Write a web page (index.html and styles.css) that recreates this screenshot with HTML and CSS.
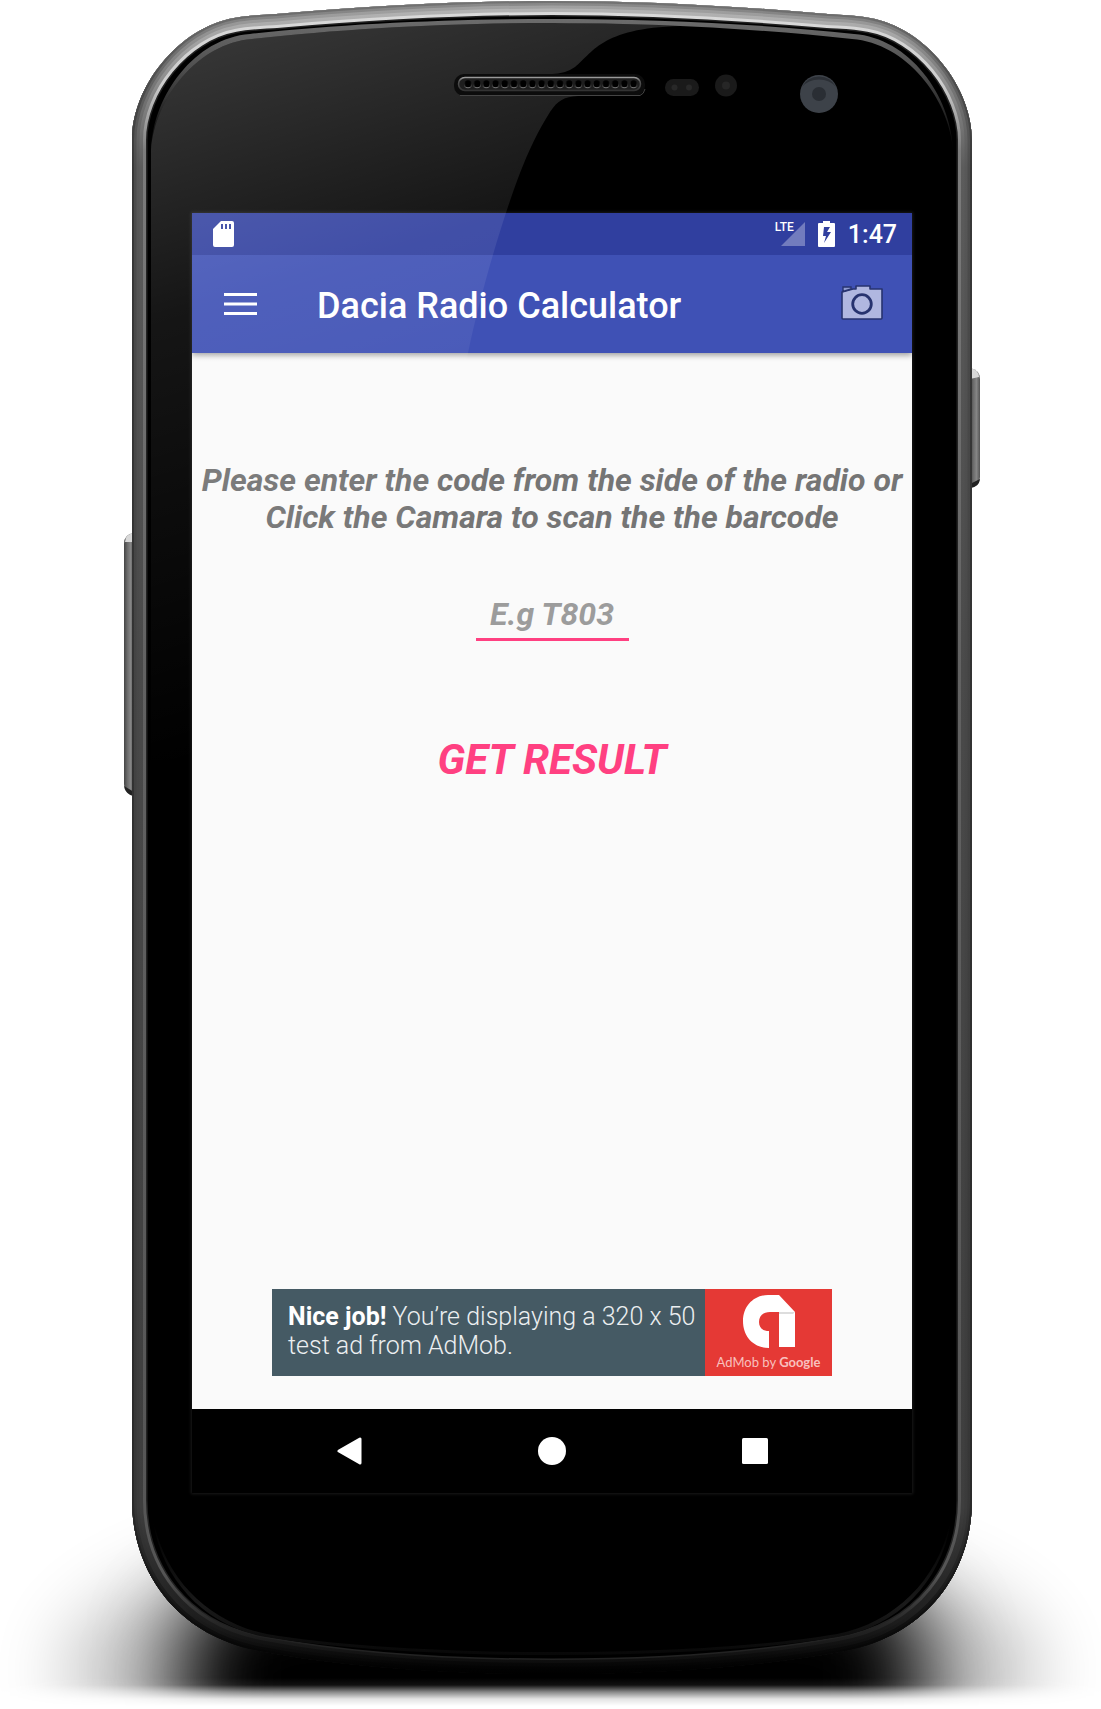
FILE: index.html
```html
<!DOCTYPE html>
<html lang="en">
<head>
<meta charset="utf-8">
<meta name="viewport" content="width=device-width, initial-scale=1">
<title>Dacia Radio Calculator</title>
<link rel="stylesheet" href="styles.css">
</head>
<body>
<div class="device">
  <svg class="device-art" viewBox="0 0 1101 1709" aria-hidden="true">
    <defs>
      <path id="shell" d="M132 140C132 87 178 28 234 18C250 15 262 15 276 14C370 6 460 1 552 1C644 1 734 6 828 14C842 15 854 15 870 18C926 28 972 87 972 140V1500C972 1570 929 1637 839 1652C764 1666 664 1674 552 1674C440 1674 340 1666 265 1652C175 1637 132 1570 132 1500Z"/>
      <clipPath id="shell-clip"><use href="#shell"/></clipPath>
      <linearGradient id="edge" gradientUnits="userSpaceOnUse" x1="0" y1="0" x2="0" y2="1674">
        <stop offset="0" stop-color="#747474"/><stop offset=".05" stop-color="#4c4c4c"/><stop offset=".1" stop-color="#383838"/><stop offset=".9" stop-color="#2a2a2a"/><stop offset="1" stop-color="#000"/>
      </linearGradient>
      <linearGradient id="edge2" gradientUnits="userSpaceOnUse" x1="0" y1="0" x2="0" y2="1674">
        <stop offset="0" stop-color="#8c8c8c"/><stop offset=".05" stop-color="#606060"/><stop offset=".1" stop-color="#4c4c4c"/><stop offset=".9" stop-color="#363636"/><stop offset="1" stop-color="#000"/>
      </linearGradient>
      <linearGradient id="body" gradientUnits="userSpaceOnUse" x1="0" y1="0" x2="0" y2="1674">
        <stop offset="0" stop-color="#a4a4a4"/><stop offset=".05" stop-color="#777"/><stop offset=".1" stop-color="#585858"/><stop offset=".4" stop-color="#484848"/><stop offset=".9" stop-color="#3b3b3b"/><stop offset=".96" stop-color="#222"/><stop offset="1" stop-color="#000"/>
      </linearGradient>
      <linearGradient id="inner" gradientUnits="userSpaceOnUse" x1="0" y1="0" x2="0" y2="1674">
        <stop offset="0" stop-color="#b8b8b8"/><stop offset=".05" stop-color="#8c8c8c"/><stop offset=".1" stop-color="#5c5c5c"/><stop offset=".4" stop-color="#4a4a4a"/><stop offset=".9" stop-color="#3e3e3e"/><stop offset=".97" stop-color="#1c1c1c"/><stop offset="1" stop-color="#020202"/>
      </linearGradient>
      <linearGradient id="shine" gradientUnits="userSpaceOnUse" x1="0" y1="0" x2="0" y2="1674">
        <stop offset="0" stop-color="#dcdcdc"/><stop offset=".05" stop-color="#ccc"/><stop offset=".09" stop-color="#7c7c7c"/><stop offset=".4" stop-color="#626262"/><stop offset=".94" stop-color="#555"/><stop offset=".97" stop-color="#262626"/><stop offset="1" stop-color="#060606"/>
      </linearGradient>
      <linearGradient id="rim" gradientUnits="userSpaceOnUse" x1="0" y1="19" x2="0" y2="1653">
        <stop offset="0" stop-color="#6c6c6c"/><stop offset=".03" stop-color="#505050"/><stop offset=".08" stop-color="#000"/><stop offset=".92" stop-color="#000"/><stop offset=".97" stop-color="#1a1a1a"/><stop offset="1" stop-color="#080808"/>
      </linearGradient>
      <linearGradient id="key" x1="0" y1="0" x2="1" y2="0">
        <stop offset="0" stop-color="#444"/><stop offset=".35" stop-color="#6c6c6c"/><stop offset=".65" stop-color="#858585"/><stop offset="1" stop-color="#555"/>
      </linearGradient>
      <linearGradient id="slot" x1="0" y1="0" x2="0" y2="1">
        <stop offset="0" stop-color="#999"/><stop offset=".3" stop-color="#555"/><stop offset="1" stop-color="#333"/>
      </linearGradient>
      <linearGradient id="fade" gradientUnits="userSpaceOnUse" x1="0" y1="1678" x2="0" y2="1706">
        <stop offset="0" stop-color="#fff"/><stop offset=".25" stop-color="#eee"/><stop offset=".5" stop-color="#777"/><stop offset=".75" stop-color="#1c1c1c"/><stop offset="1" stop-color="#000"/>
      </linearGradient>
      <mask id="floor" maskUnits="userSpaceOnUse" x="0" y="1300" width="1101" height="409"><rect x="0" y="1300" width="1101" height="409" fill="url(#fade)"/></mask>
      <filter id="soft" filterUnits="userSpaceOnUse" x="-100" y="1300" width="1301" height="600"><feGaussianBlur stdDeviation="42 34"/></filter>
      <filter id="haze" filterUnits="userSpaceOnUse" x="-100" y="1300" width="1301" height="600"><feGaussianBlur stdDeviation="36"/></filter>
    </defs>

    <g mask="url(#floor)">
      <ellipse cx="552" cy="1670" rx="490" ry="150" fill="#000" opacity=".22" filter="url(#haze)"/>
      <path d="M180 1790V1640Q200 1580 290 1580H814Q904 1580 924 1640V1790Z" filter="url(#soft)"/>
    </g>

    <path d="M134 533Q124 534 124 544V784Q124 794 134 796Z" fill="url(#key)"/>
    <path d="M134 533Q125 534 125 542H134Z" fill="#d8d8d8"/>
    <path d="M134 796Q126 795 124 786L134 792Z" fill="#222"/>
    <path d="M970 368Q980 370 980 379V477Q980 487 970 488Z" fill="url(#key)"/>
    <path d="M970 368Q979 370 979 377L970 379Z" fill="#d8d8d8"/>
    <path d="M970 488Q979 487 980 479L970 484Z" fill="#222"/>

    <use href="#shell"/>
    <g clip-path="url(#shell-clip)" fill="none">
      <use href="#shell" stroke="#222" stroke-width="31"/>
      <use href="#shell" stroke="url(#shine)" stroke-width="28"/>
      <use href="#shell" stroke="url(#inner)" stroke-width="22"/>
      <use href="#shell" stroke="url(#body)" stroke-width="15"/>
      <use href="#shell" stroke="url(#edge2)" stroke-width="9"/>
      <use href="#shell" stroke="url(#edge)" stroke-width="4"/>
    </g>
    <path d="M151 150C153 95 195 38 250 34C340 24 450 19 552 19C654 19 764 24 854 34C909 38 951 95 953 150V1500C951 1570 906 1625 838 1637C764 1649 664 1655 552 1655C440 1655 340 1649 266 1637C198 1625 153 1570 151 1500Z" fill="url(#rim)"/>
    <path d="M151 150C155 98 198 43 252 39C342 29 450 23 552 23C654 23 762 29 852 39C906 43 949 98 953 150V1500C949 1567 903 1621 837 1634C764 1646 664 1652 552 1652C440 1652 340 1646 267 1634C201 1621 155 1567 151 1500Z"/>
  </svg>

  <main class="screen">
    <div class="status-bar">
      <svg class="icon-sd" viewBox="0 0 21 26" aria-label="SD card"><path fill="#fff" fill-rule="evenodd" d="M8 0H19Q21 0 21 2V24Q21 26 19 26H2Q0 26 0 24V8ZM8 3V8H10V3ZM12 3V8H14V3ZM16 3V8H18V3Z"/></svg>
      <div class="status-right">
        <div class="network">
          <svg class="icon-signal" viewBox="0 0 24 24" aria-hidden="true"><path d="M24 0V24H0Z" fill="#fff" opacity=".32"/></svg>
          <span class="lte">LTE</span>
        </div>
        <svg class="icon-battery" viewBox="0 0 17 26" aria-label="Charging"><path fill="#fff" fill-rule="evenodd" d="M5 0H12V2H16Q17 2 17 3V25Q17 26 16 26H1Q0 26 0 25V3Q0 2 1 2H5ZM6 6L5 15H8L6 22L13 11H9L12 6Z"/></svg>
        <time class="clock">1:47</time>
      </div>
    </div>
    <header class="app-bar">
      <button class="icon-button" aria-label="Open menu"><svg class="icon-menu" viewBox="0 0 33 23"><path d="M0 1.500H33M0 11H33M0 20.500H33" stroke="#fff" stroke-width="3"/></svg></button>
      <h1 class="title">Dacia Radio Calculator</h1>
      <button class="icon-button" aria-label="Scan barcode"><svg class="icon-camera" viewBox="0 0 43 38">
        <path d="M1 7L12 4H15V1H29V4H41V33Q41 34 40 34H2Q1 34 1 33Z" fill="#b0b7e0" stroke="#27336f" stroke-width="1.6" stroke-linejoin="round"/>
        <path d="M2 6.500V2H10V4Z" fill="#8f9bd2" stroke="#27336f" stroke-width="1.4"/>
        <circle cx="21" cy="19" r="9.300" fill="#b0b7e0" stroke="#27336f" stroke-width="2.800"/>
      </svg></button>
    </header>
    <form class="content">
      <label class="prompt" for="code">Please enter the code from the side of the radio or Click the Camara to scan the the barcode</label>
      <input class="code" id="code" type="text" placeholder="E.g T803">
      <button class="submit" type="button">GET RESULT</button>
      <a class="ad" href="#ad">
        <span class="ad-text"><b>Nice job!</b> You’re displaying a 320 x 50 test ad from AdMob.</span>
        <span class="ad-brand">
          <svg class="ad-logo" viewBox="0 0 52 53" aria-hidden="true"><path fill="#fff" d="M26 53C10 53 0 41 0 26C0 11 11 0 25 0H36L52 17V52H36V17H27C20 17 16 21 16 27C16 33 20 36 26 36Z"/><path fill="#ddd" d="M36 17H52L50 19H36Z"/></svg>
          <span class="ad-caption">AdMob by <b>Google</b></span>
        </span>
      </a>
    </form>
    <nav class="nav-bar">
      <button class="nav-button" aria-label="Back"><svg viewBox="0 0 28 28"><path d="M25 2V26L4 14Z" fill="#fff" stroke="#fff" stroke-width="3" stroke-linejoin="round"/></svg></button>
      <button class="nav-button" aria-label="Home"><svg viewBox="0 0 28 28"><circle cx="14" cy="14" r="14" fill="#fff"/></svg></button>
      <button class="nav-button" aria-label="Recent apps"><svg viewBox="0 0 28 28"><rect x="1" y="1" width="26" height="26" rx="1.5" fill="#fff"/></svg></button>
    </nav>
  </main>

  <svg class="device-art glass" viewBox="0 0 1101 1709" aria-hidden="true">
    <defs>
      <linearGradient id="gloss" gradientUnits="userSpaceOnUse" x1="200" y1="50" x2="400" y2="700">
        <stop offset="0" stop-color="#fff" stop-opacity=".21"/><stop offset=".2" stop-color="#fff" stop-opacity=".14"/><stop offset=".36" stop-color="#fff" stop-opacity=".085"/><stop offset=".6" stop-color="#fff" stop-opacity=".05"/><stop offset="1" stop-color="#fff" stop-opacity="0"/>
      </linearGradient>
      <pattern id="holes" patternUnits="userSpaceOnUse" x="463.4" y="79" width="9.2" height="10">
        <circle cx="4.6" cy="5.6" r="3.6" fill="#777"/><circle cx="4.6" cy="4.8" r="3.5" fill="#000"/>
      </pattern>
    </defs>
    <path fill="url(#gloss)" d="M151 150C155 98 198 43 252 39C342 29 450 23 552 23C595 23 635 24 680 26C600 28 592 54 575 67Q565 74 552 74V96H578C564 97 558 100 550 112C538 131 528 152 520 173C502 220 480 295 468 353C440 480 410 620 390 760H151Z"/>
    <rect x="454" y="74" width="191" height="22" rx="10" fill="#0c0c0c"/>
    <path d="M460 95.500H640Q644 94 645 89" fill="none" stroke="#444"/>
    <rect x="458.500" y="77.500" width="182" height="13" rx="6.500" fill="#1e1e1e" stroke="url(#slot)" stroke-width="1.500"/>
    <rect x="463.400" y="79" width="174.800" height="10" fill="url(#holes)"/>
    <rect x="665" y="79" width="34" height="17" rx="8.500" fill="#1a1a1a"/>
    <circle cx="674.500" cy="87.500" r="3" fill="#282828"/><circle cx="689" cy="87.500" r="3" fill="#282828"/>
    <circle cx="726" cy="85.500" r="11" fill="#1a1a1a"/><circle cx="726" cy="85.500" r="4" fill="#262626"/>
    <circle cx="819" cy="94" r="19" fill="#3d4249"/><path d="M802 87A19 19 0 0 1 836 87A20 16 0 0 0 802 87" fill="#2b2f35"/><circle cx="819" cy="94" r="7" fill="#2a2e34"/>
  </svg>
</div>
</body>
</html>
```
FILE: styles.css
```css
* { box-sizing: border-box; }

body {
  margin: 0;
  background: #fff;
  font-family: Roboto, "Liberation Sans", sans-serif;
}

button {
  padding: 0;
  border: 0;
  background: none;
  font: inherit;
  cursor: pointer;
}

svg { display: block; }

/* The phone drawing, the screen and the glass share one grid cell. */
.device {
  display: grid;
  width: 100%;
  max-width: 1200px;
  margin: 0 auto;
}

.device-art,
.screen { grid-area: 1 / 1; }

.device-art { width: 100%; height: auto; }

.glass { z-index: 1; pointer-events: none; }

.screen {
  display: flex;
  flex-direction: column;
  width: 65.4%;
  aspect-ratio: 9 / 16;
  margin: 19.35% 0 0 17.44%;
  background: #fafafa;
  box-shadow: 0 0 3px 1px #1a1a1a;
  z-index: 0;
}

.status-bar {
  display: flex;
  align-items: center;
  justify-content: space-between;
  height: 42px;
  padding: 0 15px 0 21px;
  background: #303f9f;
  color: #fff;
}

.status-right { display: flex; align-items: center; gap: 13px; }
.icon-sd { width: 21px; height: 26px; }
.icon-battery { width: 17px; height: 26px; }
.icon-signal { width: 24px; height: 24px; }
.network { position: relative; }

.lte {
  position: absolute;
  top: -2px;
  right: 11px;
  font-size: 12px;
  font-weight: 500;
  line-height: 14px;
}

.clock { padding-top: 2px; font-size: 25px; font-weight: 500; line-height: 30px; }

.app-bar {
  display: flex;
  align-items: center;
  height: 98px;
  padding: 0 28px 0 32px;
  background: #3f51b5;
  color: #fff;
  box-shadow: 0 2px 6px rgba(0, 0, 0, .4);
  clip-path: inset(0 0 -10px);
}

.title {
  flex: 1;
  margin: 0;
  padding: 4px 0 0 60px;
  font-size: 36px;
  font-weight: 500;
  line-height: 42px;
}

.icon-menu { width: 33px; height: 23px; }
.icon-camera { width: 43px; height: 38px; }

.content {
  flex: 1;
  display: flex;
  flex-direction: column;
  align-items: center;
  padding: 109px 0 33px;
}

.prompt {
  max-width: 704px;
  color: #757575;
  font-size: 32px;
  font-weight: 700;
  font-style: italic;
  line-height: 37px;
  text-align: center;
}

.code {
  width: 153px;
  margin-top: 60px;
  padding: 0 0 5px;
  border: 0;
  border-bottom: 3px solid #ff4081;
  background: none;
  color: #757575;
  font: italic 700 32px/37px Roboto, sans-serif;
  text-align: center;
  outline: none;
}

.code::placeholder { color: #9c9c9c; opacity: 1; }

.submit {
  margin-top: 94px;
  color: #ff4081;
  font-size: 42px;
  font-weight: 700;
  font-style: italic;
  line-height: 49px;
}

.ad {
  display: flex;
  width: 560px;
  max-width: 100%;
  min-height: 87px;
  margin-top: auto;
  background: #455a64;
  color: #eceff1;
  text-decoration: none;
}

.ad-text {
  flex: 1;
  padding: 13px 0 0 16px;
  font-size: 25px;
  font-weight: 300;
  line-height: 29px;
}

.ad-text b { color: #fff; font-weight: 700; }

.ad-brand {
  display: flex;
  flex-direction: column;
  align-items: center;
  gap: 6px;
  width: 127px;
  padding-top: 6px;
  background: #e53935;
}

.ad-logo { width: 52px; height: 53px; }

.ad-caption {
  color: #f8c0be;
  font: 13px/16px Lato, sans-serif;
}

.nav-bar {
  display: flex;
  align-items: center;
  justify-content: center;
  gap: 175px;
  height: 84px;
  background: #000;
}

.nav-button svg { width: 28px; height: 28px; }
```
